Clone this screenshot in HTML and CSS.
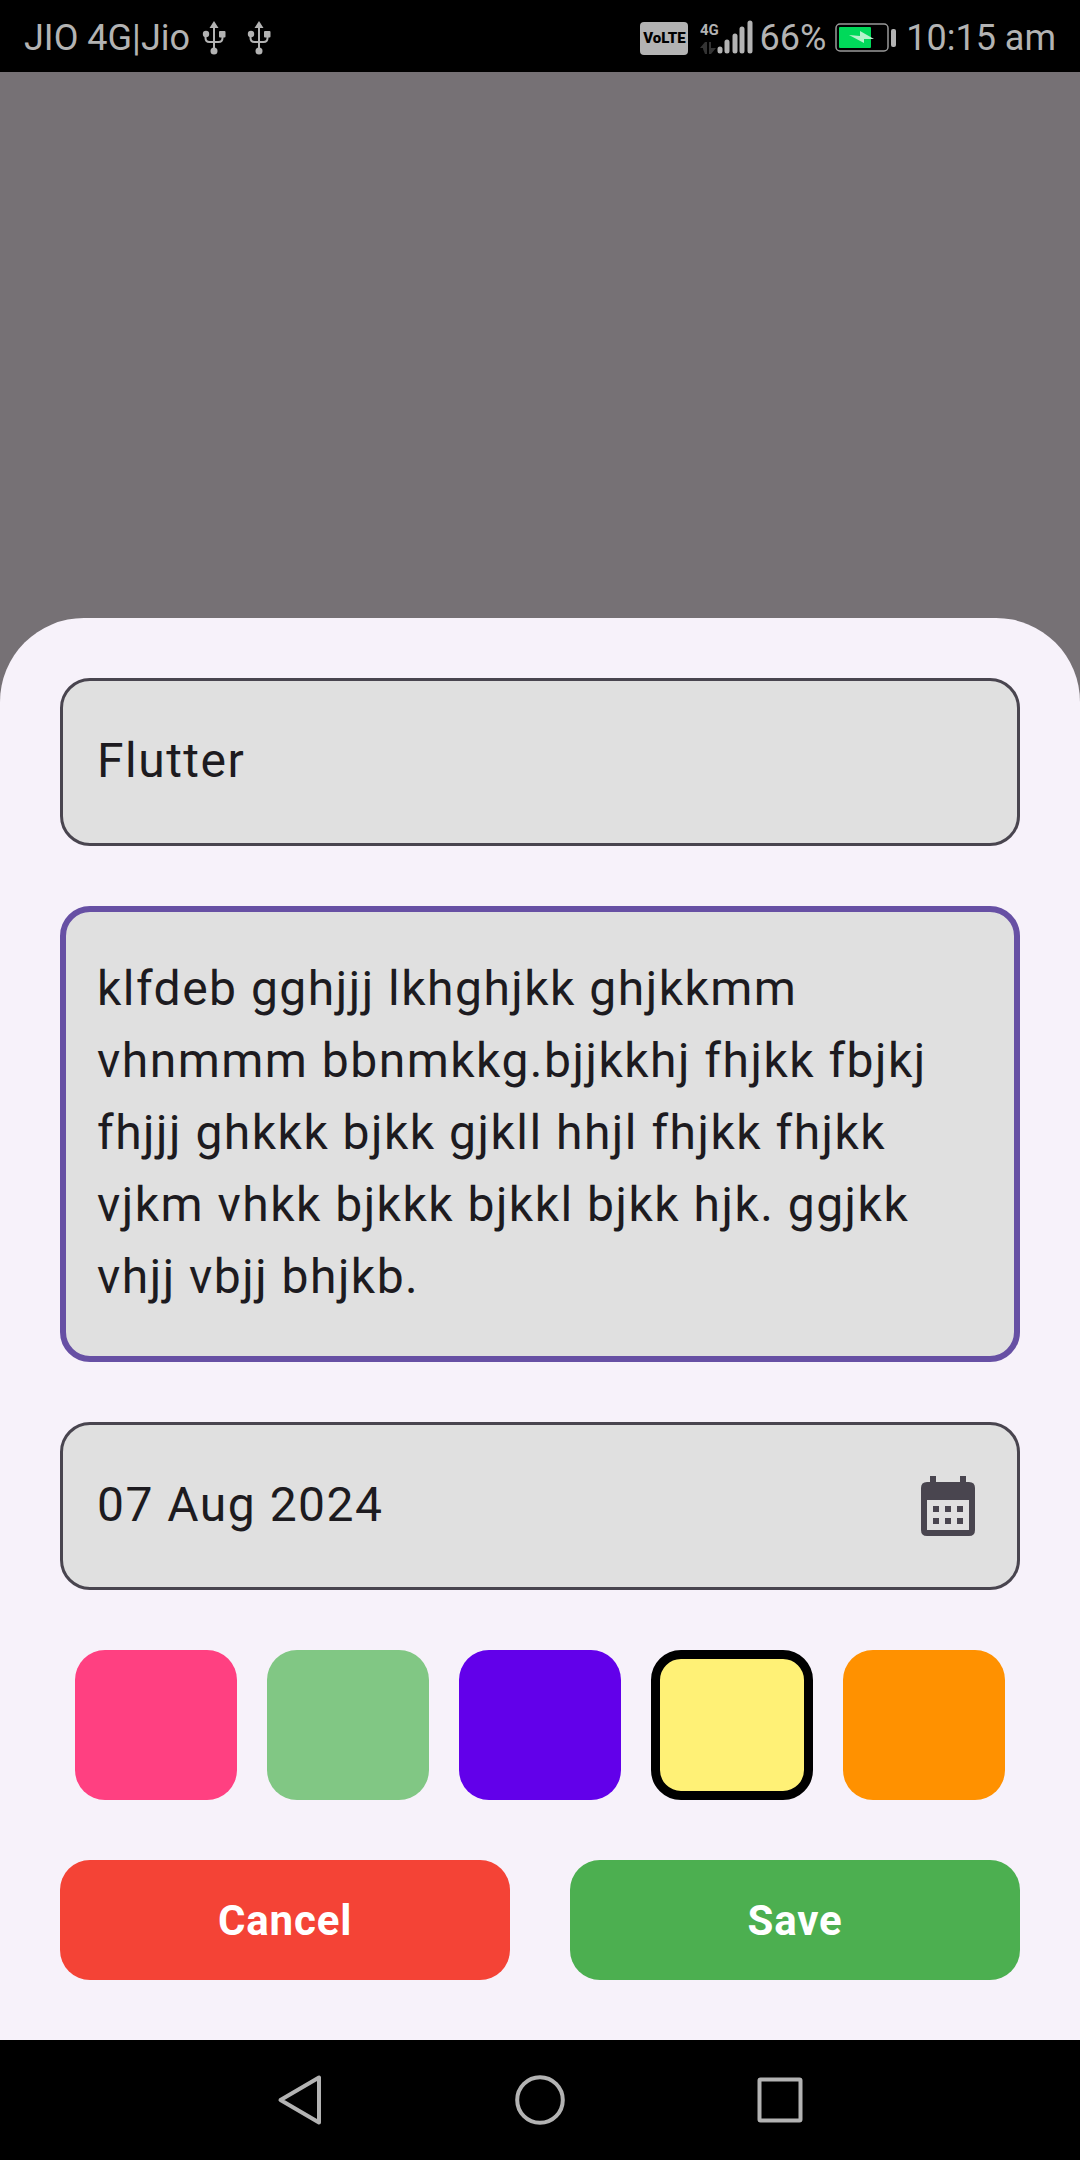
FILE: index.html
```html
<!DOCTYPE html>
<html lang="en">
<head>
  <meta charset="utf-8">
  <meta name="viewport" content="width=device-width, initial-scale=1">
  <title>Edit note</title>
  <link rel="stylesheet" href="styles.css">
</head>
<body>
  <header class="status">
    <div class="status-left">
      <span>JIO 4G|Jio</span>
      <svg class="usb" viewBox="0 0 24 36" aria-hidden="true"><use href="#usb"/></svg>
      <svg class="usb" viewBox="0 0 24 36" aria-hidden="true">
        <g id="usb">
          <path d="M12 6V30M3.500 13V18Q3.500 22 7.500 22H16.500Q20.500 22 20.500 18V13" fill="none" stroke="currentColor" stroke-width="2"/>
          <path d="M12 1L16.500 8H7.500Z" fill="currentColor"/>
          <circle cx="12" cy="31" r="3.500" fill="currentColor"/>
          <circle cx="4" cy="14" r="3.200" fill="currentColor"/>
          <rect x="17" y="11" width="6.500" height="6.500" rx="1" fill="currentColor"/>
        </g>
      </svg>
    </div>
    <div class="status-right">
      <span class="volte">VoLTE</span>
      <svg class="signal" viewBox="0 0 54 36" role="img" aria-label="4G signal">
        <text class="signal-label" x="0" y="15">4G</text>
        <path d="M5 34V22L0 28H3V29M5 22H7V34H5ZM9 22H11V34H9ZM11 34L16 28H11Z" fill="#333"/>
        <path d="M20 31V29M27 31V22M35 31V16M42 31V9M50 31V3" fill="none" stroke="currentColor" stroke-width="5" stroke-linecap="round"/>
      </svg>
      <span>66%</span>
      <svg class="battery" viewBox="0 0 62 30" role="img" aria-label="Battery charging">
        <rect x="1" y="1" width="52" height="27" rx="4" fill="none" stroke="#999" stroke-width="1.500"/>
        <rect x="4" y="4" width="32" height="21" rx="1" fill="#00d95a"/>
        <path d="M14 12L25 13V8L39 16L29 16V20Z" fill="#b5f3cc"/>
        <rect x="56" y="6" width="5" height="18" rx="2" fill="currentColor"/>
      </svg>
      <time datetime="10:15">10:15 am</time>
    </div>
  </header>

  <main class="scrim">
    <form class="sheet">
      <input class="field" type="text" aria-label="Title" value="Flutter">
      <textarea class="field field-active" rows="5" aria-label="Description" spellcheck="false">klfdeb gghjjj lkhghjkk ghjkkmm vhnmmm bbnmkkg.bjjkkhj fhjkk fbjkj fhjjj ghkkk bjkk gjkll hhjl fhjkk fhjkk vjkm vhkk bjkkk bjkkl bjkk hjk. ggjkk vhjj vbjj bhjkb.</textarea>
      <div class="field date">
        <input class="date-input" type="text" aria-label="Date" value="07 Aug 2024">
        <button class="date-button" type="button" aria-label="Pick a date">
          <svg class="calendar" viewBox="0 0 54 60" aria-hidden="true">
            <path fill="currentColor" fill-rule="evenodd" d="M9 0H15V6H39V0H45V6H48Q54 6 54 12V54Q54 60 48 60H6Q0 60 0 54V12Q0 6 6 6H9ZM6 24V54H48V24Z"/>
            <path fill="currentColor" d="M12 30h6v6h-6zM24 30h6v6h-6zM36 30h6v6h-6zM12 42h6v6h-6zM24 42h6v6h-6zM36 42h6v6h-6z"/>
          </svg>
        </button>
      </div>
      <div class="swatches" role="radiogroup" aria-label="Color">
        <input class="swatch pink" type="radio" name="color" aria-label="Pink">
        <input class="swatch green" type="radio" name="color" aria-label="Green">
        <input class="swatch purple" type="radio" name="color" aria-label="Purple">
        <input class="swatch yellow" type="radio" name="color" aria-label="Yellow" checked>
        <input class="swatch orange" type="radio" name="color" aria-label="Orange">
      </div>
      <div class="actions">
        <button class="action cancel" type="button">Cancel</button>
        <button class="action save" type="submit">Save</button>
      </div>
    </form>
  </main>

  <nav class="navbar" aria-label="System">
    <button class="nav-button" type="button" aria-label="Back">
      <svg class="nav-icon" viewBox="0 0 60 60"><path d="M49 7.500V52.500L10.500 30Z"/></svg>
    </button>
    <button class="nav-button" type="button" aria-label="Home">
      <svg class="nav-icon" viewBox="0 0 60 60"><circle cx="30" cy="30" r="22.800"/></svg>
    </button>
    <button class="nav-button" type="button" aria-label="Recents">
      <svg class="nav-icon" viewBox="0 0 60 60"><rect x="9.500" y="9.500" width="41" height="41" rx="1"/></svg>
    </button>
  </nav>
</body>
</html>
```
FILE: styles.css
```css
* {
  box-sizing: border-box;
}

body {
  margin: 0;
  min-height: 100vh;
  display: flex;
  flex-direction: column;
  background: #000;
  color: #1d1b20;
  font-family: Roboto, sans-serif;
}

button,
input,
textarea {
  margin: 0;
  font: inherit;
  color: inherit;
}

button {
  border: 0;
  cursor: pointer;
}

/* Status bar */
.status {
  height: 72px;
  padding: 4px 24px 0;
  display: flex;
  align-items: center;
  justify-content: space-between;
  color: #b3b3b3;
  font-size: 36px;
  white-space: nowrap;
}

.status-left,
.status-right {
  display: flex;
  align-items: center;
}

.status-left {
  gap: 12px;
}

.usb {
  width: 24px;
  height: 36px;
}

.usb + .usb {
  margin-left: 9px;
}

.volte {
  width: 48px;
  height: 33px;
  margin-right: 12px;
  border-radius: 4px;
  background: #b3b3b3;
  color: #000;
  font-size: 15px;
  font-weight: 900;
  line-height: 33px;
  text-align: center;
}

.signal {
  width: 54px;
  height: 36px;
  margin-right: 5px;
}

.signal-label {
  fill: currentColor;
  font-size: 15px;
  font-weight: 700;
}

.battery {
  width: 62px;
  height: 30px;
  margin: 0 9px;
}

/* Bottom sheet */
.scrim {
  flex: 1;
  display: flex;
  flex-direction: column;
  justify-content: flex-end;
  background: #767175;
}

.sheet {
  padding: 60px;
  display: flex;
  flex-direction: column;
  gap: 60px;
  border-radius: 84px 84px 0 0;
  background: #f7f2fa;
}

.field {
  display: block;
  width: 100%;
  padding: 43px 34px 47px;
  border: 3px solid #49454f;
  border-radius: 30px;
  outline: 0;
  background: #e0e0e0;
  font-size: 48px;
  line-height: 72px;
  letter-spacing: 0.031em;
}

.field-active {
  padding: 41px 31px 43px;
  border: 6px solid #6750a4;
  resize: none;
  overflow: hidden;
}

input.field {
  height: 168px;
}

.date {
  padding: 0 42px 0 34px;
  display: flex;
  align-items: center;
}

.date-input {
  flex: 1;
  min-width: 0;
  height: 162px;
  padding: 0 0 4px;
  border: 0;
  outline: 0;
  background: none;
  letter-spacing: inherit;
}

.date-button {
  padding: 0;
  background: none;
  color: #49454f;
}

.calendar {
  display: block;
  width: 54px;
  height: 60px;
}

.swatches {
  padding: 0 15px;
  display: grid;
  grid-template-columns: repeat(5, minmax(0, 1fr));
  gap: 30px;
}

.swatch {
  appearance: none;
  height: 150px;
  border-radius: 30px;
  cursor: pointer;
}

.swatch:checked {
  border: 9px solid #000;
}

.pink { background: #ff4081; }
.green { background: #81c784; }
.purple { background: #6200ea; }
.yellow { background: #fff176; }
.orange { background: #ff9100; }

.actions {
  display: flex;
  gap: 60px;
}

.action {
  flex: 1;
  height: 120px;
  border-radius: 30px;
  color: #fff;
  font-size: 42px;
  font-weight: 700;
  letter-spacing: 0.02em;
}

.cancel { background: #f44336; }
.save { background: #4caf50; }

/* Navigation bar */
.navbar {
  height: 120px;
  display: flex;
  align-items: center;
  justify-content: center;
  gap: 60px;
}

.nav-button {
  width: 180px;
  height: 120px;
  padding: 0;
  display: grid;
  place-items: center;
  background: none;
}

.nav-icon {
  width: 60px;
  height: 60px;
  fill: none;
  stroke: #b3b3b3;
  stroke-width: 4px;
  stroke-linejoin: round;
}
```
